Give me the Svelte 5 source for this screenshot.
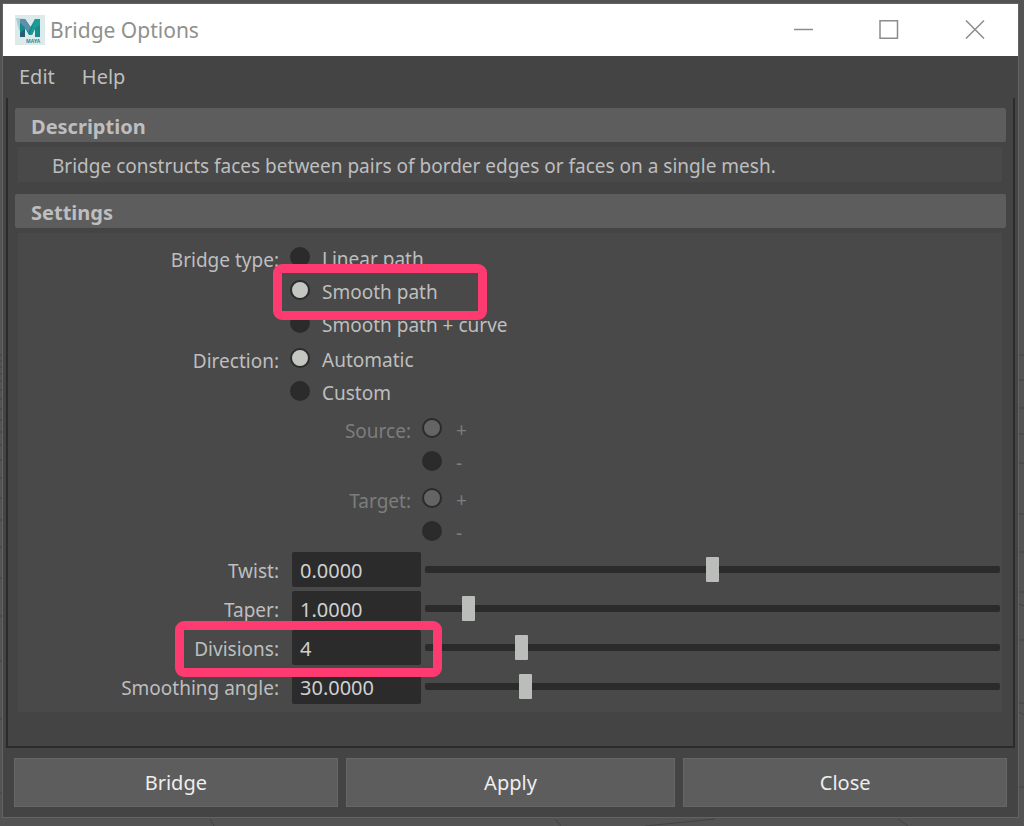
<script lang="ts">
	type Field = { id: string; label: string; text: string; value: number; min: number; max: number };

	let bridgeType = $state('smooth');
	let direction = $state('automatic');
	let source = $state('+');
	let target = $state('+');

	const bridgeTypes = [
		['linear', 'Linear path'],
		['smooth', 'Smooth path'],
		['curve', 'Smooth path + curve']
	];
	const directions = [
		['automatic', 'Automatic'],
		['custom', 'Custom']
	];
	const signs = ['+', '-'];

	let fields: Field[] = $state([
		{ id: 'twist', label: 'Twist', text: '0.0000', value: 0, min: -180, max: 180 },
		{ id: 'taper', label: 'Taper', text: '1.0000', value: 1, min: 0, max: 15 },
		{ id: 'divisions', label: 'Divisions', text: '4', value: 4, min: 0, max: 25 },
		{ id: 'angle', label: 'Smoothing angle', text: '30.0000', value: 30, min: 0, max: 180 }
	]);

	const update = (field: Field) => {
		field.text = field.id === 'divisions' ? String(Math.round(field.value)) : field.value.toFixed(4);
	};
</script>

<div class="desktop">
	<svg class="grid-lines" viewBox="0 0 1024 826" preserveAspectRatio="none" aria-hidden="true">
		<path
			d="M0 355h3M0 361h3M0 367h3M0 374h3M0 381h3M0 390h3M0 399h3M0 409h3M0 420h3M0 432h3M0 445h3M0 460h3M0 478h3M0 498h3M0 520h3M0 547h3M0 578h3M0 616h3M0 661h3M0 719h3M0 793h3M1019 355h5M1019 380h5M1019 408h5M1019 434h5M1019 463h5M1019 514h5M1019 552h5M1019 592h5M1019 604l5 2M1019 640h5M1019 703h5M1019 712l5 3M1019 787h5M210 819l4 7M645 826l70-7M898 819l10 7M555 819l6 7"
		/>
	</svg>
	<main class="window">
		<header class="titlebar">
			<svg class="logo" viewBox="0 0 30 30" aria-hidden="true">
				<rect width="30" height="30" fill="#dcebea" />
				<path d="M1 3l9 1 5 7-3 5-3-3-1 5-4-3z" fill="#a9cbd3" />
				<path d="M5 22V4h5l5.500 8L20 4h5v18h-5v-8l-3 6h-3l-4-7v9z" fill="#158c8c" />
				<path d="M5 4h5l5.500 8-2 5-4-5-4.500-4z" fill="#5d8fae" />
				<path d="M5 22v-4l5-4v8z" fill="#245f74" />
				<path d="M20 4h5v6l-5 3-3 7h-2z" fill="#1c9c99" />
				<text x="11" y="28" font-size="5" font-weight="700" fill="#3f8293">MAYA</text>
			</svg>
			<h1>Bridge Options</h1>
			<div class="window-buttons">
				<button aria-label="Minimize">
					<svg viewBox="0 0 20 20"><path d="M1 9.500h19" /></svg>
				</button>
				<button aria-label="Maximize">
					<svg viewBox="0 0 20 20"><path d="M1 .8h17.500v17.500h-17.500z" /></svg>
				</button>
				<button aria-label="Close window">
					<svg viewBox="0 0 20 20"><path d="M1 .5l18 18M19 .5l-18 18" /></svg>
				</button>
			</div>
		</header>

		<nav class="menu">
			<button>Edit</button>
			<button>Help</button>
		</nav>

		<div class="pane">
			<section>
				<h2>Description</h2>
				<p class="body description">
					Bridge constructs faces between pairs of border edges or faces on a single mesh.
				</p>
			</section>

			<section>
				<h2>Settings</h2>
				<form class="body settings">
					<div class="group" role="radiogroup" aria-labelledby="type-label">
						<span class="label" id="type-label">Bridge type:</span>
						<div class="options">
							{#each bridgeTypes as [value, text]}
								<label class="option">
									<input type="radio" name="type" {value} bind:group={bridgeType} />
									<span>{text}</span>
									{#if value === 'smooth'}
										<span class="highlight around-option"></span>
									{/if}
								</label>
							{/each}
						</div>
					</div>
					<div class="group" role="radiogroup" aria-labelledby="direction-label">
						<span class="label" id="direction-label">Direction:</span>
						<div class="options">
							{#each directions as [value, text]}
								<label class="option">
									<input type="radio" name="direction" {value} bind:group={direction} />
									<span>{text}</span>
								</label>
							{/each}
						</div>
					</div>
					<div class="group nested" role="radiogroup" aria-labelledby="source-label">
						<span class="label" id="source-label">Source:</span>
						<div class="options">
							{#each signs as sign}
								<label class="option">
									<input type="radio" name="source" value={sign} bind:group={source} disabled />
									<span>{sign}</span>
								</label>
							{/each}
						</div>
					</div>
					<div class="group nested" role="radiogroup" aria-labelledby="target-label">
						<span class="label" id="target-label">Target:</span>
						<div class="options">
							{#each signs as sign}
								<label class="option">
									<input type="radio" name="target" value={sign} bind:group={target} disabled />
									<span>{sign}</span>
								</label>
							{/each}
						</div>
					</div>

					<div class="fields">
						{#each fields as field}
							<div class="field">
								<label class="label" for={field.id}>{field.label}:</label>
								<input class="number" id={field.id} type="text" bind:value={field.text} />
								<input
									class="slider"
									type="range"
									aria-label={field.label}
									min={field.min}
									max={field.max}
									step="any"
									bind:value={field.value}
									oninput={() => update(field)}
								/>
								{#if field.id === 'divisions'}
									<span class="highlight around-field"></span>
								{/if}
							</div>
						{/each}
					</div>
				</form>
			</section>
		</div>

		<footer>
			<button>Bridge</button>
			<button>Apply</button>
			<button>Close</button>
		</footer>
	</main>
</div>

<style>
	:global(body) {
		margin: 0;
		background: #535353;
	}
	.desktop {
		position: relative;
		box-sizing: border-box;
		min-height: 100vh;
		padding: 3px 5px 6px 2px;
		background: #535353;
		color: #bebebe;
		font-family: 'Noto Sans', 'Open Sans', sans-serif;
		font-size: 20px;
		line-height: 28px;
	}
	.grid-lines {
		position: absolute;
		inset: 0;
		width: 100%;
		height: 100%;
		fill: none;
		stroke: #424242;
	}
	.window {
		position: relative;
		border: 1px solid #636363;
		background: #444;
	}
	button,
	input {
		font: inherit;
		color: inherit;
		border: 0;
		margin: 0;
		padding: 0;
		background: none;
	}

	.titlebar {
		display: flex;
		align-items: center;
		height: 52px;
		padding-left: 12px;
		background: #fff;
		color: #8f918d;
	}
	.logo {
		width: 30px;
		height: 30px;
	}
	h1 {
		flex: 1;
		margin: 0 0 0 5px;
		font-size: 21px;
		font-weight: 400;
	}
	.window-buttons {
		display: flex;
	}
	.window-buttons button {
		display: flex;
		align-items: center;
		justify-content: center;
		width: 86px;
		height: 52px;
	}
	.window-buttons svg {
		width: 20px;
		height: 20px;
		fill: none;
		stroke: #8b8d8a;
		stroke-width: 1.5;
	}

	.menu {
		display: flex;
		gap: 27px;
		height: 42px;
		padding-left: 16px;
	}

	.pane {
		margin: 0 3px;
		padding: 10px 7px 34px;
		border: 2px solid #2b2b2b;
		border-top: 0;
	}
	section + section {
		margin-top: 12px;
	}
	h2 {
		margin: 0;
		padding: 5px 16px 1px;
		border-radius: 2px;
		background: #5d5d5d;
		font-size: 20px;
		line-height: 28px;
	}
	.body {
		margin: 5px 4px 0 3px;
		background: #494949;
		font-size: 19px;
	}
	.description {
		padding: 5px 34px 2px;
	}
	.settings {
		padding: 7px 2px 8px 0;
	}

	.group {
		display: flex;
		gap: 11px;
		margin-bottom: 2px;
	}
	.label {
		width: 261px;
		padding-top: 2px;
		text-align: right;
		line-height: 36px;
	}
	.option {
		position: relative;
		display: flex;
		align-items: center;
		gap: 12px;
		height: 33px;
	}
	.option > span {
		padding-top: 4px;
	}
	.nested {
		margin-top: 4px;
		color: #7d7d7d;
	}
	.nested .label {
		width: 393px;
	}
	.nested .option {
		gap: 14px;
	}
	input[type='radio'] {
		appearance: none;
		width: 20px;
		height: 20px;
		border: 2px solid #2b2b2b;
		border-radius: 50%;
		background: #2b2b2b;
	}
	input[type='radio']:checked {
		background: #c4c7c1;
	}
	input[type='radio']:checked:disabled {
		background: #646464;
	}

	.fields {
		display: flex;
		flex-direction: column;
		gap: 4px;
		margin-top: 5px;
	}
	.field {
		position: relative;
		display: flex;
		align-items: center;
		height: 35px;
	}
	.number {
		box-sizing: border-box;
		width: 129px;
		height: 35px;
		margin: 0 4px 0 13px;
		padding: 2px 8px 0;
		border-radius: 2px;
		background: #2b2b2b;
		color: #d0d0d0;
		font-size: 20px;
	}
	.slider {
		appearance: none;
		flex: 1;
		min-width: 0;
		height: 26px;
	}
	.slider::-webkit-slider-runnable-track {
		height: 7px;
		border-radius: 2px;
		background: #2b2b2b;
	}
	.slider::-webkit-slider-thumb {
		appearance: none;
		width: 13px;
		height: 25px;
		margin-top: -9px;
		border-radius: 1px;
		background: #bbbdba;
	}

	.highlight {
		position: absolute;
		z-index: 1;
		box-sizing: border-box;
		border: 9px solid #fe3b71;
		border-radius: 9px;
		pointer-events: none;
	}
	.around-option {
		top: -9px;
		left: -17px;
		width: 214px;
		height: 56px;
	}
	.around-field {
		top: -9px;
		left: 157px;
		width: 267px;
		height: 56px;
	}

	footer {
		display: grid;
		grid-template-columns: 54fr 55fr 54fr;
		gap: 8px;
		padding: 10px 11px;
	}
	footer button {
		height: 49px;
		border: 1px solid #666;
		background: #5d5d5d;
		color: #eee;
	}
</style>
